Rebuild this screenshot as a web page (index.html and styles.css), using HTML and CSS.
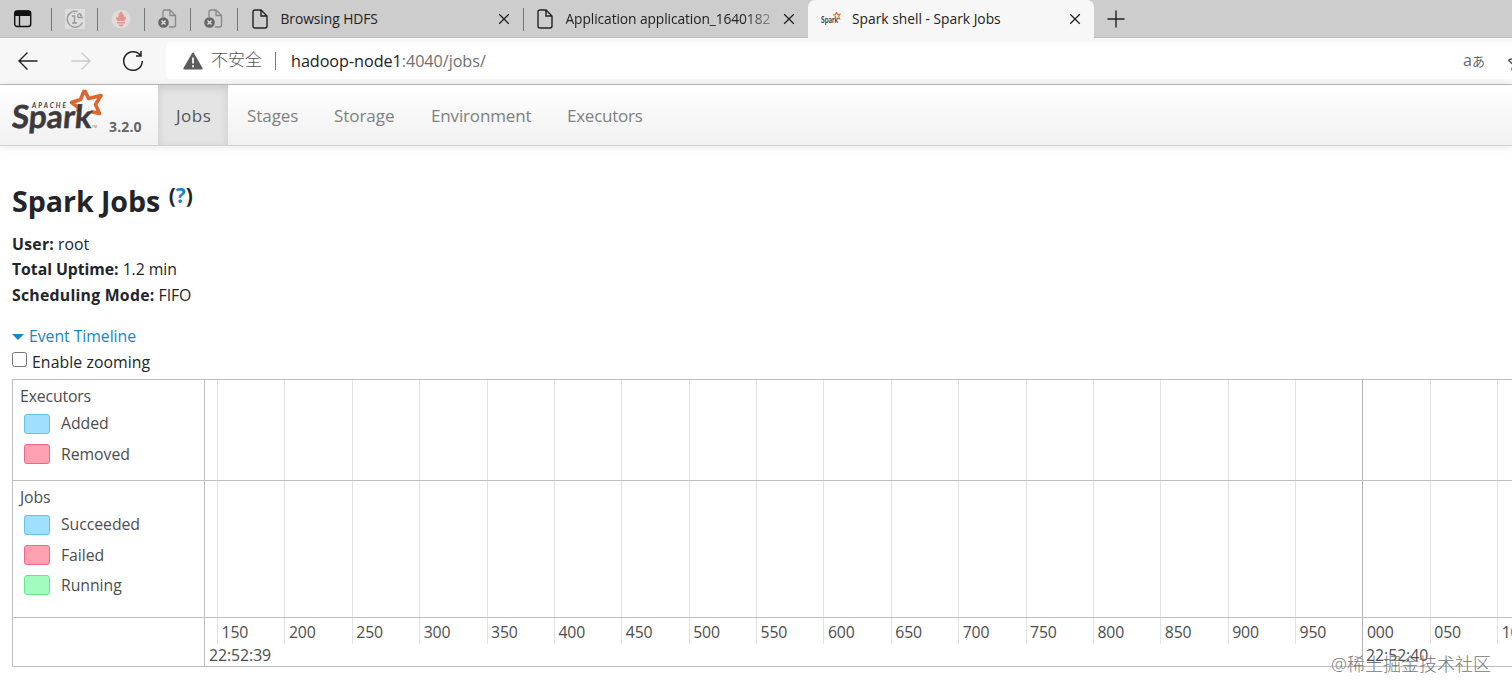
FILE: index.html
```html
<!DOCTYPE html>
<html lang="en">
<head>
  <meta charset="UTF-8">
  <title>Spark shell - Spark Jobs</title>
  <link rel="stylesheet" href="styles.css">
</head>
<body>
  <div class="tab-strip">
    <div class="pinned first">
      <svg width="20" height="20" viewBox="0 0 20 20"><rect x="1.7" y="2" width="16" height="15.5" rx="2.5" fill="none" stroke="#111" stroke-width="1.4"/><path d="M1.5 7V4.5Q1.5 1.5 4.500 1.500H15Q18 1.500 18 4.500V7Z" fill="#111"/><path d="M6.500 6V17.500" stroke="#111" stroke-width="1.300"/></svg>
    </div>
    <div class="pinned">
      <svg width="20" height="20" viewBox="0 0 20 20"><rect width="20" height="20" fill="#dedede"/><path d="M12.500 2.500A8 8 0 1 0 17.500 13.500" fill="none" stroke="#999" stroke-width="1.400"/><path d="M7 7H9.500V14M7 14H12M9.500 4V5M12.500 8C12.500 5 14.500 4 16 5.500M12.500 8.500H18M15 6.500H17" fill="none" stroke="#999" stroke-width="1.300"/></svg>
    </div>
    <div class="pinned">
      <svg width="20" height="20" viewBox="0 0 20 20"><circle cx="10" cy="10" r="9.500" fill="#dedbd9"/><path d="M10 2C10.500 4 13.500 5 13 8L15 7.500Q15 10 13.500 12H6.500Q5 10 5 7.500L7 8.500Q7 5 10 2ZM6 13H14V14.500H6ZM7.500 15.500H12.500Q12 17.500 10 17.500T7.500 15.500Z" fill="#e4968a"/></svg>
    </div>
    <div class="pinned">
      <svg width="20" height="22" viewBox="0 0 20 22"><path d="M5 9V4Q5 2 7 2H12L17.500 7.500V17Q17.500 19 15.500 19H11M12 2V7.500H17.500" fill="none" stroke="#888" stroke-width="1.300"/><circle cx="5.500" cy="14.500" r="5.300" fill="#666"/><path d="M3.500 12.500L7.500 16.500M7.500 12.500L3.500 16.500" stroke="#ddd" stroke-width="1.500"/></svg>
    </div>
    <div class="pinned">
      <svg width="20" height="22" viewBox="0 0 20 22"><path d="M5 9V4Q5 2 7 2H12L17.500 7.500V17Q17.500 19 15.500 19H11M12 2V7.500H17.500" fill="none" stroke="#888" stroke-width="1.300"/><circle cx="5.500" cy="14.500" r="5.300" fill="#666"/><path d="M3.500 12.500L7.500 16.500M7.500 12.500L3.500 16.500" stroke="#ddd" stroke-width="1.500"/></svg>
    </div>
    <div class="tab browsing">
      <svg width="16" height="20" viewBox="0 0 16 20"><path d="M1 3Q1 1 3 1H9L15 7V17Q15 19 13 19H3Q1 19 1 17ZM9 1V7H15" fill="none" stroke="#222" stroke-width="1.400"/></svg>
      <span class="tab-title">Browsing HDFS</span>
      <svg class="close" width="12" height="12" viewBox="0 0 12 12"><path d="M1.200 1.200L10.800 10.800M10.800 1.200L1.200 10.800"/></svg>
    </div>
    <div class="tab application">
      <svg width="16" height="20" viewBox="0 0 16 20"><path d="M1 3Q1 1 3 1H9L15 7V17Q15 19 13 19H3Q1 19 1 17ZM9 1V7H15" fill="none" stroke="#222" stroke-width="1.400"/></svg>
      <span class="tab-title faded">Application application_1640182</span>
      <svg class="close" width="12" height="12" viewBox="0 0 12 12"><path d="M1.200 1.200L10.800 10.800M10.800 1.200L1.200 10.800"/></svg>
    </div>
    <div class="tab active">
      <svg class="favicon" width="20" height="20" viewBox="0 0 20 20"><path d="M15.500 3L16.500 5.500L19 5.200L17.500 7.500L18.500 10L16 9M15.500 3L14.500 5.700L12 6.200" fill="none" stroke="#e0703c" stroke-width="1.200"/><text class="logo-text" x="0" y="14" font-size="8.500" textLength="17" lengthAdjust="spacingAndGlyphs">Spark</text></svg>
      <span class="tab-title">Spark shell - Spark Jobs</span>
      <svg class="close" width="12" height="12" viewBox="0 0 12 12"><path d="M1.200 1.200L10.800 10.800M10.800 1.200L1.200 10.800"/></svg>
    </div>
    <div class="new-tab">
      <svg width="18" height="18" viewBox="0 0 18 18"><path d="M9 .5V17.500M.5 9H17.500" stroke="#222" stroke-width="1.400"/></svg>
    </div>
  </div>

  <div class="toolbar">
    <div class="nav-buttons">
      <svg width="20" height="20" viewBox="0 0 20 20"><path d="M19.500 10H1M9.500 1.500L1 10L9.500 18.500" fill="none" stroke="#222" stroke-width="1.400"/></svg>
      <svg width="20" height="20" viewBox="0 0 20 20"><path d="M.5 10H19M10.500 1.500L19 10L10.500 18.500" fill="none" stroke="#ccc" stroke-width="1.400"/></svg>
      <svg width="22" height="22" viewBox="0 0 22 22"><path d="M18.500 5.500A9.300 9.300 0 1 0 20.300 11M19 1V6H14" fill="none" stroke="#222" stroke-width="1.500"/></svg>
    </div>
    <div class="address-bar">
      <svg width="20" height="18" viewBox="0 0 20 18"><path d="M10 .5Q10.600 .5 11 1.200L19.500 16Q20 17.500 18.500 17.500H1.500Q0 17.500 .5 16L9 1.200Q9.400 .5 10 .5Z" fill="#5c5c5c"/><path d="M10 5.500V11.500M10 13.300V15.300" stroke="#fff" stroke-width="1.700"/></svg>
      <span class="insecure">不安全</span>
      <span class="address-divider"></span>
      <span class="url"><b>hadoop-node1</b>:4040/jobs/</span>
      <span class="translate"><span>a</span>あ</span>
      <svg class="star" width="20" height="18" viewBox="0 0 20 18"><path d="M10 1L7.500 5.500L1.500 6.500Q.5 7 1.200 8L5 11.500L4 16.500Q4 17.500 5 17L10 14" fill="none" stroke="#555" stroke-width="1.500"/></svg>
    </div>
  </div>

  <div class="navbar">
    <div class="brand">
      <svg width="94" height="52" viewBox="0 0 94 52">
        <path d="M72.500 5L76.500 13.500L89 10.500L83.500 19.500L87.500 28.500L78.500 26.500M72.500 5L68.500 14.500L59.500 17.500L67 23L65.500 27" fill="none" stroke="#dc6830" stroke-width="3.600" stroke-linejoin="round"/>
        <text class="logo-text small" x="20" y="23" font-size="6.500" textLength="34">APACHE</text>
        <text class="logo-text" transform="translate(0 43) skewX(-5)" x="-1" y="0" font-size="32" textLength="80" lengthAdjust="spacingAndGlyphs" stroke="#3c3a3e" stroke-width=".5">Spark</text>
        <text x="80" y="43" font-size="3.500" fill="#777">TM</text>
      </svg>
      <span class="version">3.2.0</span>
    </div>
    <a class="nav-link current">Jobs</a>
    <a class="nav-link stages">Stages</a>
    <a class="nav-link storage">Storage</a>
    <a class="nav-link environment">Environment</a>
    <a class="nav-link executors">Executors</a>
  </div>

  <div class="content">
    <h3>Spark Jobs <sup>(<a>?</a>)</sup></h3>
    <ul class="summary">
      <li><strong>User:</strong> root</li>
      <li><strong class="uptime">Total Uptime:</strong> 1.2 min</li>
      <li><strong>Scheduling Mode:</strong> FIFO</li>
    </ul>
    <div class="timeline-toggle"><span class="arrow-open"></span><a>Event Timeline</a></div>
    <label class="zoom-row"><input type="checkbox"><span>Enable zooming</span></label>

    <div class="timeline">
      <div class="group executors-group">
        <div class="group-title">Executors</div>
        <div class="legend"><i class="swatch blue"></i>Added</div>
        <div class="legend"><i class="swatch red"></i>Removed</div>
      </div>
      <div class="group jobs-group">
        <div class="group-title">Jobs</div>
        <div class="legend"><i class="swatch blue"></i>Succeeded</div>
        <div class="legend"><i class="swatch red"></i>Failed</div>
        <div class="legend"><i class="swatch green"></i>Running</div>
      </div>
      <div class="group axis-corner"></div>
      <div class="ticks">
        <div class="tick">150</div>
        <div class="tick">200</div>
        <div class="tick">250</div>
        <div class="tick">300</div>
        <div class="tick">350</div>
        <div class="tick">400</div>
        <div class="tick">450</div>
        <div class="tick">500</div>
        <div class="tick">550</div>
        <div class="tick">600</div>
        <div class="tick">650</div>
        <div class="tick">700</div>
        <div class="tick">750</div>
        <div class="tick">800</div>
        <div class="tick">850</div>
        <div class="tick">900</div>
        <div class="tick">950</div>
        <div class="tick major">000</div>
        <div class="tick">050</div>
        <div class="tick">100</div>
      </div>
      <div class="row row-executors"></div>
      <div class="row row-jobs"></div>
      <div class="row row-axis"><span>22:52:39</span><span class="next-second">22:52:40</span></div>
    </div>
  </div>
  <div class="watermark">@稀土掘金技术社区</div>
</body>
</html>
```
FILE: styles.css
```css
* {
  box-sizing: border-box;
}

body {
  margin: 0;
  height: 695px;
  overflow: hidden;
  position: relative;
  background: #fff;
  color: #212529;
  font-family: "Open Sans", "Noto Sans CJK SC", sans-serif;
  font-size: 15.8px;
  letter-spacing: -0.05px;
}

svg {
  display: block;
  flex: none;
}

/* browser tabs */
.tab-strip {
  display: flex;
  height: 38px;
  background: #cdcdcd;
  border-bottom: 1px solid #bcbcbc;
  color: #222;
}

.pinned, .tab {
  display: flex;
  align-items: center;
  position: relative;
  flex: none;
}

.pinned {
  width: 46.5px;
  justify-content: center;
}

.pinned.first {
  width: 51.5px;
  padding-right: 5px;
}

.pinned::after, .browsing::after {
  content: "";
  position: absolute;
  right: 0;
  top: 8px;
  width: 1px;
  height: 23px;
  background: #777;
}

.tab-title {
  font-size: 13.8px;
  white-space: nowrap;
  margin-left: 13px;
}

.close {
  margin-left: auto;
  stroke: #222;
  stroke-width: 1.3;
}

.browsing {
  width: 286px;
  padding: 0 14px 0 14px;
}

.application {
  width: 284.5px;
  padding: 0 13px 0 13px;
}

.faded {
  width: 207px;
  letter-spacing: -0.1px;
  -webkit-mask-image: linear-gradient(to right, #000 86%, rgba(0, 0, 0, 0.3));
  mask-image: linear-gradient(to right, #000 86%, rgba(0, 0, 0, 0.3));
}

.active {
  width: 286px;
  height: 38px;
  padding: 0 13px 1px;
  background: #f7f7f7;
  border-radius: 7px 7px 0 0;
}

.active .tab-title {
  margin-left: 11px;
  letter-spacing: 0;
}

.new-tab {
  display: flex;
  align-items: center;
  margin-left: 13px;
}

.toolbar {
  display: flex;
  align-items: center;
  height: 47px;
  padding-bottom: 1px;
  background: #f7f7f7;
  border-bottom: 1px solid #bbb;
}

.nav-buttons {
  display: flex;
  align-items: center;
  gap: 33px;
  width: 166px;
  padding-left: 18px;
  flex: none;
}

.nav-buttons svg:last-child {
  margin-left: -2px;
}

.address-bar {
  display: flex;
  align-items: center;
  flex: 1;
  height: 37px;
  padding-left: 17px;
  background: #fff;
  border-radius: 5px 0 0 5px;
  overflow: hidden;
}

.insecure {
  margin-left: 8px;
  font-size: 17px;
  font-weight: 300;
  color: #555;
  letter-spacing: 0;
  line-height: 24px;
  padding-bottom: 1px;
}

.address-divider {
  width: 1px;
  height: 18px;
  margin: 0 15px 0 13px;
  background: #777;
}

.url {
  font-size: 16.2px;
  color: #707070;
  white-space: nowrap;
}

.url b {
  font-weight: 400;
  color: #222;
}

.translate {
  display: flex;
  align-items: center;
  margin-left: auto;
  font-family: "Noto Sans CJK JP", sans-serif;
  font-size: 13px;
  line-height: 20px;
  letter-spacing: 0;
  color: #666;
}

.translate span {
  font-family: "Open Sans", sans-serif;
  font-size: 16px;
  padding-bottom: 2px;
}

.star {
  margin: 3px -16px 0 23px;
}

/* spark navigation */
.navbar {
  display: flex;
  height: 61px;
  background: linear-gradient(#fff, #f1f1f1);
  border-bottom: 1px solid #d2d2d2;
  box-shadow: 0 1px 8px rgba(0, 0, 0, 0.1);
}

.brand {
  display: flex;
  width: 158px;
  padding-left: 12px;
}

.logo-text {
  font-family: "Lato", sans-serif;
  font-weight: 700;
  fill: #3c3a3e;
  letter-spacing: 0;
}

.logo-text.small {
  font-style: italic;
}

.version {
  margin: 32px 0 0 3px;
  font-size: 14px;
  font-weight: 700;
  letter-spacing: 0.15px;
  color: #666;
}

.nav-link {
  padding-top: 19px;
  font-size: 17px;
  line-height: 24px;
  color: #808080;
}

.nav-link.current {
  width: 70px;
  padding-left: 18px;
  background: #e4e4e4;
  box-shadow: inset 0 3px 8px rgba(0, 0, 0, 0.12);
  color: #555;
  letter-spacing: 0.5px;
}

.stages {
  width: 106px;
  padding-left: 19px;
}

.storage {
  width: 97px;
}

.environment {
  width: 136px;
  letter-spacing: -0.15px;
}

.executors {
  letter-spacing: -0.25px;
}

.content {
  padding-left: 12px;
}

h3 {
  margin: 0;
  padding-top: 36px;
  font-size: 28.6px;
  line-height: 38px;
  height: 86px;
}

sup {
  font-size: 21px;
  line-height: 0;
  vertical-align: 9px;
  margin-left: 1px;
}

a {
  color: #1487cb;
}

.summary {
  list-style: none;
  margin: 0;
  padding: 0;
  line-height: 25.4px;
}

strong {
  font-weight: 700;
  letter-spacing: 0.25px;
}

.uptime {
  letter-spacing: -0.05px;
}

.timeline-toggle {
  display: flex;
  align-items: center;
  height: 26px;
  margin-top: 15px;
}

.arrow-open {
  border: 6px solid transparent;
  border-top-color: #1487cb;
  border-bottom: 0;
  margin: 2px 5px 0 0;
}

.zoom-row {
  display: flex;
  align-items: center;
  height: 25px;
  letter-spacing: 0.08px;
}

.zoom-row input {
  width: 15px;
  height: 15px;
  margin: 0 5px 4px 0;
}

.timeline {
  display: grid;
  grid-template-columns: 192px 1308px;
  grid-template-rows: 101px 137px 48px;
  height: 288px;
  margin-top: 5px;
  border: 1px solid #bfbfbf;
  border-right: 0;
  color: #4d4d4d;
}

.group {
  grid-column: 1;
  padding: 4px 0 0 7px;
  border-right: 1px solid #bfbfbf;
  border-bottom: 1px solid #bfbfbf;
}

.axis-corner, .row.row-axis {
  border-bottom: 0;
}

.group-title {
  height: 25px;
  line-height: 25px;
  letter-spacing: -0.15px;
}

.jobs-group {
  padding-top: 4px;
}

.legend {
  display: flex;
  align-items: center;
  height: 30.2px;
  padding: 0 0 2px 4px;
}

.swatch {
  width: 26px;
  height: 20px;
  margin: 1px 11px 0 0;
  border: 1px solid;
  border-radius: 3px;
}

.blue {
  background: #a0dffd;
  border-color: #60c3f2;
}

.red {
  background: #ffa1b0;
  border-color: #f2648a;
}

.green {
  background: #a2fcc0;
  border-color: #65e990;
}

.ticks {
  display: flex;
  grid-column: 2;
  grid-row: 1 / 4;
  padding-left: 12px;
  overflow: hidden;
}

.tick {
  flex: none;
  width: 67.38px;
  height: 264px;
  padding: 240px 0 0 3.5px;
  border-left: 1px solid #e3e3e3;
  line-height: 24px;
  letter-spacing: -0.15px;
}

.tick.major {
  height: 286px;
  border-color: #b5b5b5;
}

.row {
  grid-column: 2;
  border-bottom: 1px solid #bfbfbf;
}

.row-executors {
  grid-row: 1;
}

.row-jobs {
  grid-row: 2;
}

.row-axis {
  display: flex;
  grid-row: 3;
  padding: 25px 0 0 4px;
  line-height: 24px;
}

.next-second {
  margin-left: 1095px;
}

.watermark {
  position: absolute;
  left: 1331px;
  top: 652px;
  font-size: 18px;
  line-height: 24px;
  font-weight: 300;
  letter-spacing: 0;
  color: #777;
  white-space: nowrap;
}
```
